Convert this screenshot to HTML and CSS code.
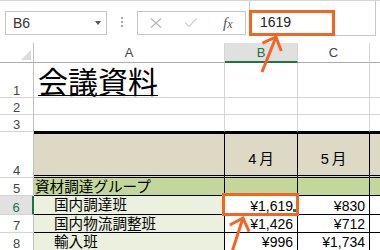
FILE: index.html
```html
<!DOCTYPE html>
<html lang="ja">
<head>
<meta charset="utf-8">
<link rel="stylesheet" href="styles.css">
</head>
<body>
<div class="fbar">
  <div class="namebox"><span>B6</span><span class="caret"></span></div>
  <div class="grip"><i></i><i></i><i></i></div>
  <div class="btns">
    <svg class="ic-x" width="12" height="12" viewBox="0 0 12 12"><path d="M1 1.5L11 10.5M11 1.5L1 10.5" stroke="#b9b9b9" stroke-width="1.4" fill="none"/></svg>
    <svg class="ic-ok" width="14" height="10" viewBox="0 0 14 10"><path d="M1 4.5L5 8.5L12.5 0.5" stroke="#d4d4d4" stroke-width="1.4" fill="none"/></svg>
    <span class="fx">f<span class="fx-x">x</span></span>
  </div>
  <div class="finput">1619</div>
</div>
<div class="sheet">
  <div class="corner"><i></i></div>
  <div class="ch">A</div>
  <div class="ch sel">B</div>
  <div class="ch">C</div>
  <div class="ch"></div>

  <div class="rh">1</div>
  <div class="c title"><span class="title-text">会議資料</span></div>
  <div class="c"></div>
  <div class="c"></div>
  <div class="c"></div>

  <div class="rh">2</div>
  <div class="c"></div>
  <div class="c"></div>
  <div class="c"></div>
  <div class="c"></div>

  <div class="rh">3</div>
  <div class="c top"></div>
  <div class="c top"></div>
  <div class="c top"></div>
  <div class="c top"></div>

  <div class="rh">4</div>
  <div class="hd"></div>
  <div class="hd">4月</div>
  <div class="hd">5月</div>
  <div class="hd"></div>

  <div class="rh">5</div>
  <div class="grp">資材調達グループ</div>
  <div class="grp"></div>
  <div class="grp"></div>
  <div class="grp"></div>

  <div class="rh sel">6</div>
  <div class="sub">国内調達班</div>
  <div class="num">¥1,619</div>
  <div class="num">¥830</div>
  <div class="num"></div>

  <div class="rh">7</div>
  <div class="sub">国内物流調整班</div>
  <div class="num">¥1,426</div>
  <div class="num">¥712</div>
  <div class="num"></div>

  <div class="rh">8</div>
  <div class="sub">輸入班</div>
  <div class="num">¥996</div>
  <div class="num">¥1,734</div>
  <div class="num"></div>
</div>

<div class="handle"></div>
<div class="callout callout-formula"></div>
<div class="callout callout-cell"></div>
<svg class="arrows" width="380" height="250" viewBox="0 0 380 250">
  <g stroke="#f26522" stroke-width="3" fill="none" stroke-linecap="butt" stroke-linejoin="miter">
    <path d="M262 72L276 37"/>
    <path d="M262.4 43.2L276 37L281.3 51"/>
    <path d="M232 252L243 218"/>
    <path d="M229.8 225L243 218L249.1 231.7"/>
  </g>
</svg>
</body>
</html>
```

FILE: styles.css
```css
* { box-sizing: border-box; margin: 0; padding: 0; }
html, body { width: 380px; height: 250px; overflow: hidden; background: #fff; }
body {
  position: relative;
  font-family: "Liberation Sans", "Noto Sans CJK JP", sans-serif;
  color: #000;
}

/* formula bar */
.fbar {
  height: 43px;
  border-top: 1px solid #d6d6d6;
  display: flex;
  align-items: flex-start;
}
.namebox {
  margin: 10px 0 0 5px;
  width: 102px;
  height: 24px;
  border: 1px solid #c6c6c6;
  display: flex;
  align-items: center;
  padding-left: 7px;
  font-size: 14px;
  color: #333;
}
.caret {
  margin-left: auto;
  margin-right: 5px;
  width: 0;
  height: 0;
  border-style: solid;
  border-width: 4px 3.5px 0 3.5px;
  border-color: #555 transparent transparent transparent;
}
.grip {
  margin: 16px 0 0 14px;
  display: flex;
  flex-direction: column;
  gap: 2px;
}
.grip i { display: block; width: 2px; height: 2px; background: #a6a6a6; }
.btns {
  margin: 10px 0 0 14px;
  width: 109px;
  height: 24px;
  border: 1px solid #c6c6c6;
  display: flex;
  align-items: center;
}
.ic-x { margin-left: 12px; }
.ic-ok { margin-left: 22px; }
.fx {
  margin-left: 25px;
  font-family: "Liberation Serif", serif;
  font-style: italic;
  font-size: 15px;
  color: #555;
  line-height: 16px;
}
.fx-x { font-size: 12px; }
.finput {
  margin-left: 3px;
  width: 127px;
  height: 35px;
  border: 1px solid #c6c6c6;
  border-top: none;
  padding: 13px 0 0 10px;
  font-size: 14px;
  line-height: 16px;
  color: #222;
}

/* sheet */
.sheet {
  width: 380px;
  overflow: hidden;
  display: grid;
  grid-template-columns: 34px 191px 73px 72px 30px;
  grid-template-rows: 20px 35px 17px 17px 46px 18px 19px 18px 18px;
}
.corner {
  border-right: 1px solid #c0c0c0;
  border-bottom: 1px solid #ababab;
  display: flex;
  justify-content: flex-end;
  align-items: flex-end;
  padding: 0 2px 2px 0;
}
.corner i {
  display: block;
  width: 0;
  height: 0;
  border-style: solid;
  border-width: 0 0 10px 10px;
  border-color: transparent transparent #dcdcdc transparent;
}
.ch {
  border-right: 1px solid #d4d4d4;
  border-bottom: 1px solid #ababab;
  display: flex;
  align-items: center;
  justify-content: center;
  font-size: 13px;
  color: #444;
}
.ch.sel {
  background: #dfe0df;
  color: #217346;
  border-bottom: 2px solid #217346;
}
.rh {
  border-right: 1px solid #c0c0c0;
  border-bottom: 1px solid #d4d4d4;
  display: flex;
  align-items: flex-end;
  justify-content: center;
  font-size: 13px;
  line-height: 13px;
  color: #444;
}
.rh.sel {
  background: #e1e1e1;
  color: #217346;
  border-right: 2px solid #217346;
}
.c {
  border-right: 1px solid #d4d4d4;
  border-bottom: 1px solid #d4d4d4;
}
.c.top { border-bottom-color: #000; }
.title {
  display: flex;
  align-items: flex-end;
  padding: 0 0 1px 4px;
  white-space: nowrap;
  overflow: visible;
}
.title-text {
  display: inline-block;
  font-family: "Noto Sans CJK JP", sans-serif;
  font-size: 30px;
  line-height: 30px;
  border-bottom: 1px solid #000;
}
.hd {
  background: #ddd9c4;
  border-top: 2px solid #000;
  border-right: 1px solid #000;
  border-bottom: 3px double #000;
  display: flex;
  align-items: center;
  justify-content: center;
  padding-top: 6px;
  font-size: 14.6px;
  letter-spacing: 3px;
  text-indent: 3px;
}
.grp {
  background: #c4d79b;
  border-right: 1px solid #000;
  border-bottom: 1px solid #000;
  display: flex;
  align-items: center;
  padding-left: 1px;
  font-size: 14.6px;
  white-space: nowrap;
  line-height: 16px;
}
.sub {
  background: #ebf1de;
  border-right: 1px solid #000;
  border-bottom: 1px solid #000;
  display: flex;
  align-items: center;
  padding-left: 20px;
  font-size: 14.6px;
  line-height: 16px;
  white-space: nowrap;
}
.num {
  border-right: 1px solid #000;
  border-bottom: 1px solid #000;
  display: flex;
  align-items: center;
  justify-content: flex-end;
  padding: 1px 4px 0 0;
  font-size: 14px;
  line-height: 16px;
}

/* overlays */
.handle {
  position: absolute;
  left: 293px;
  top: 209px;
  width: 3px;
  height: 3px;
  background: #217346;
}
.callout {
  position: absolute;
  border: 3px solid #f26522;
}
.callout-formula { left: 249px; top: 10px; width: 86px; height: 26px; }
.callout-cell { left: 222px; top: 193px; width: 77px; height: 23px; }
.arrows { position: absolute; left: 0; top: 0; pointer-events: none; }
```
